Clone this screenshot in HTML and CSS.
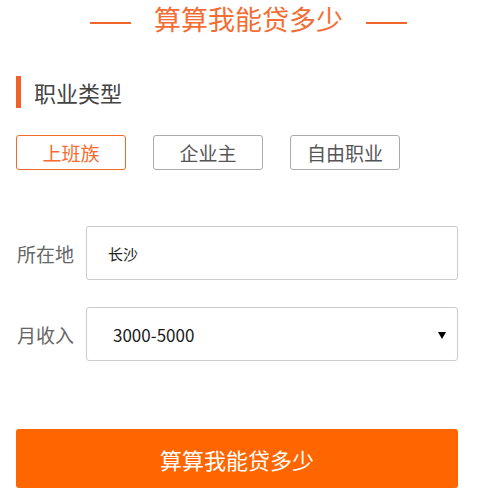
FILE: index.html
```html
<!DOCTYPE html>
<html lang="zh-CN">
<head>
<meta charset="utf-8">
<title>算算我能贷多少</title>
<link rel="stylesheet" href="styles.css">
</head>
<body>
<div class="page">
  <div class="title">
    <span class="title-line"></span>
    <h1 class="title-text">算算我能贷多少</h1>
    <span class="title-line"></span>
  </div>

  <div class="section-head">
    <span class="section-bar"></span>
    <h2 class="section-text">职业类型</h2>
  </div>

  <div class="options">
    <button class="opt opt-active">上班族</button>
    <button class="opt">企业主</button>
    <button class="opt">自由职业</button>
  </div>

  <div class="form-row row-first">
    <label class="row-label">所在地</label>
    <div class="field"><span class="field-value city">长沙</span></div>
  </div>

  <div class="form-row">
    <label class="row-label">月收入</label>
    <div class="field field-select"><span class="field-value income">3000-5000</span><span class="caret"></span></div>
  </div>

  <button class="submit">算算我能贷多少</button>
</div>
</body>
</html>
```

FILE: styles.css
```css
* { box-sizing: border-box; }
html, body { margin: 0; padding: 0; background: #fff; }
body { font-family: "Noto Sans CJK SC", "Noto Sans", sans-serif; }

.page {
  width: 442px;
  margin-left: 16px;
}

.title {
  height: 44px;
  display: flex;
  align-items: center;
  padding-left: 74px;
}
.title-line {
  width: 41px;
  height: 2px;
  background: #f1662c;
  margin-top: 1px;
}
.title-text {
  margin: 0 23px 0 23px;
  font-size: 27px;
  font-weight: 400;
  line-height: 40px;
  color: #f36d34;
  letter-spacing: 0;
  position: relative;
  top: -3px;
}

.section-head {
  margin-top: 32px;
  height: 32px;
  display: flex;
  align-items: center;
}
.section-bar {
  width: 5px;
  height: 32px;
  background: #f1622a;
}
.section-text {
  margin: 0 0 0 13px;
  font-size: 22px;
  font-weight: 400;
  color: #444;
  line-height: 32px;
}

.options {
  margin-top: 27px;
  display: flex;
  gap: 27px;
}
.opt {
  width: 110px;
  height: 35px;
  border: 1px solid #aaa;
  border-radius: 3px;
  background: #fff;
  font-family: inherit;
  font-size: 19px;
  color: #555;
  padding: 0;
  line-height: 33px;
}
.opt-active {
  border-color: #f26a26;
  color: #f86b2e;
}

.form-row {
  margin-top: 27px;
  height: 54px;
  display: flex;
  align-items: center;
}
.row-first { margin-top: 56px; }
.row-label {
  width: 70px;
  font-size: 19px;
  color: #666;
  padding-left: 1px;
}
.field {
  position: relative;
  flex: 1;
  height: 54px;
  border: 1px solid #ccc;
  border-radius: 3px;
  display: flex;
  align-items: center;
}
.field-value { color: #222; }
.city {
  font-size: 15px;
  padding-left: 21px;
}
.income {
  font-size: 17px;
  padding-left: 26px;
  color: #1a1a1a;
}
.caret {
  position: absolute;
  right: 11px;
  top: 24px;
  width: 0;
  height: 0;
  border-left: 4px solid transparent;
  border-right: 4px solid transparent;
  border-top: 7px solid #000;
}

.submit {
  display: block;
  width: 442px;
  height: 59px;
  margin-top: 68px;
  border: none;
  border-radius: 3px;
  background: #ff6600;
  color: #fff;
  font-family: inherit;
  font-size: 22px;
  padding: 0;
}
```
